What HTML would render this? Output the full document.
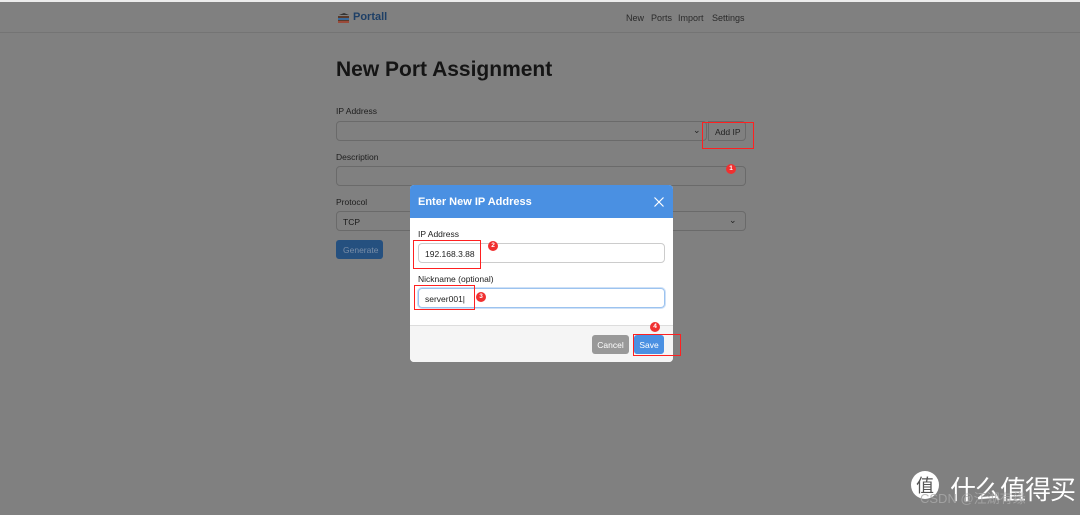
<!DOCTYPE html>
<html><head><meta charset="utf-8"><style>
*{box-sizing:border-box;margin:0;padding:0}
body{width:1080px;height:515px;overflow:hidden;background:#808080;font-family:"Liberation Sans","Noto Sans CJK SC",sans-serif;position:relative;color:#1a1a1a}
.abs{position:absolute}
.topline{left:0;top:0;width:1080px;height:2px;background:#ececec}
.nav{left:0;top:2px;width:1080px;height:31px;border-bottom:1px solid #747474}
.brand{left:353px;top:11px;font-size:11px;font-weight:bold;color:#1e3f66}
.links{top:13px;font-size:9px;color:#2a2a2a}
h1{position:absolute;left:336px;top:58px;font-size:21px;font-weight:bold;color:#151515}
.lbl{font-size:8.5px;color:#1d1d1d}
.inp{border:1px solid #6a6a6a;border-radius:4px;background:#808080}
.chev{font-size:9px;color:#222}
.modal{left:410px;top:185px;width:263px;height:177px;background:#fff;border-radius:4px;overflow:hidden}
.mh{height:33px;background:#4a90e2;color:#fff;font-size:11px;font-weight:bold;padding:11px 0 0 8px;position:relative}
.mi{position:absolute;left:8px;width:247px;height:20px;border:1px solid #ccc;border-radius:4px;font-size:8.5px;padding:5px 6px;color:#222}
.foot{position:absolute;left:0;top:140px;width:263px;height:37px;background:#f5f5f5;border-top:1px solid #ddd}
.btn{position:absolute;font-size:8.5px;color:#fff;border-radius:3px;text-align:center;padding-top:5px;height:19px}
.red{border:1px solid #ff2020;position:absolute}
.dot{position:absolute;width:10px;height:10px;border-radius:50%;background:#f03030;color:#fff;font-size:6.5px;text-align:center;line-height:10px;font-weight:bold}
</style></head><body>
<div class="abs topline"></div>
<div class="abs nav"></div>
<svg class="abs" style="left:337px;top:12px" width="13" height="11" viewBox="0 0 13 11"><path d="M1 4h11v7H1z" fill="#5a3a2a"/><path d="M2 3l5-2 5 2z" fill="#333"/><rect x="1" y="6" width="11" height="2" fill="#3a6a9a"/><rect x="1" y="9" width="11" height="2" fill="#9a4a3a"/></svg>
<div class="abs brand">Portall</div>
<div class="abs links" style="left:626px">New</div>
<div class="abs links" style="left:651px">Ports</div>
<div class="abs links" style="left:678px">Import</div>
<div class="abs links" style="left:712px">Settings</div>
<h1>New Port Assignment</h1>
<div class="abs lbl" style="left:336px;top:106px">IP Address</div>
<div class="abs inp" style="left:336px;top:121px;width:371px;height:20px"></div>
<div class="abs chev" style="left:693px;top:125px">&#8964;</div>
<div class="abs inp" style="left:708px;top:121px;width:38px;height:20px;border-radius:0 4px 4px 0;font-size:8.5px;padding:5px 0 0 6px;color:#222">Add IP</div>
<div class="abs lbl" style="left:336px;top:152px">Description</div>
<div class="abs inp" style="left:336px;top:166px;width:410px;height:20px"></div>
<div class="abs lbl" style="left:336px;top:197px">Protocol</div>
<div class="abs inp" style="left:336px;top:211px;width:410px;height:20px;font-size:8.5px;padding:5px 6px">TCP</div>
<div class="abs chev" style="left:729px;top:215px">&#8964;</div>
<div class="abs" style="left:336px;top:240px;width:47px;height:19px;background:#25507f;border-radius:3px;color:#7a8ea8;font-size:8.5px;padding:5px 0 0 7px">Generate</div>
<div class="red" style="left:702px;top:122px;width:52px;height:27px"></div>
<div class="dot" style="left:726px;top:164px">1</div>
<div class="abs modal">
<div class="mh">Enter New IP Address<svg style="position:absolute;right:9px;top:12px" width="10" height="10" viewBox="0 0 10 10"><path d="M0.5 0.5L9.5 9.5M9.5 0.5L0.5 9.5" stroke="#fff" stroke-width="1.2"/></svg></div>
<div class="abs lbl" style="left:8px;top:44px">IP Address</div>
<div class="mi" style="top:58px">192.168.3.88</div>
<div class="abs lbl" style="left:8px;top:89px">Nickname (optional)</div>
<div class="mi" style="top:103px;border-color:#9cc3ef;box-shadow:0 0 0 1px #cfe1f7">server001|</div>
<div class="foot"></div>
<div class="btn" style="left:182px;top:150px;width:37px;background:#999">Cancel</div>
<div class="btn" style="left:224px;top:150px;width:30px;background:#4a90e2">Save</div>
</div>
<div class="red" style="left:413px;top:240px;width:68px;height:29px"></div>
<div class="dot" style="left:488px;top:241px">2</div>
<div class="red" style="left:414px;top:285px;width:61px;height:25px"></div>
<div class="dot" style="left:476px;top:292px">3</div>
<div class="red" style="left:633px;top:334px;width:48px;height:22px"></div>
<div class="dot" style="left:650px;top:322px">4</div>
<div class="abs" style="left:911px;top:471px;width:28px;height:28px;border-radius:50%;background:#fff;color:#555;font-size:18px;text-align:center;line-height:28px;font-family:'Noto Sans CJK SC',sans-serif">值</div>
<div class="abs" style="left:950px;top:470px;color:#fff;font-size:26px;font-family:'Noto Sans CJK SC',sans-serif;letter-spacing:-1px">什么值得买</div>
<div class="abs" style="left:920px;top:488px;color:#aaa;font-size:13px;opacity:.8">CSDN @江湖有缘</div>
</body></html>
